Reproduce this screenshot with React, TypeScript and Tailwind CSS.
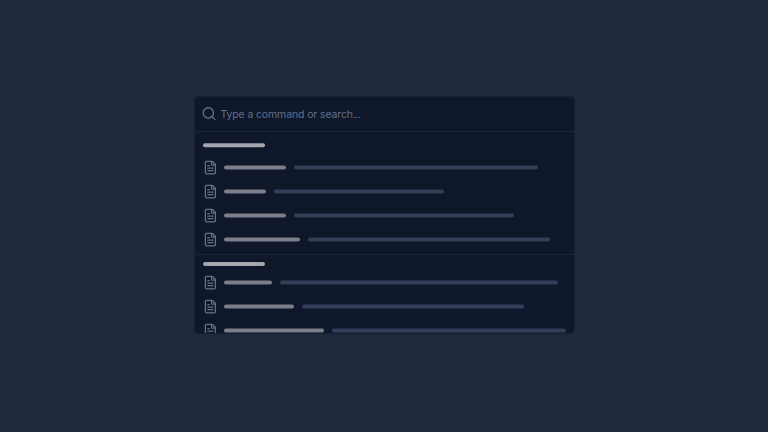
import { FileText, Search } from "lucide-react";

type Row = { title: string; detail: string };

const recent: Row[] = [
  { title: "w-[62px]", detail: "w-[244px]" },
  { title: "w-[42px]", detail: "w-[170px]" },
  { title: "w-[62px]", detail: "w-[220px]" },
  { title: "w-[76px]", detail: "w-[242px]" },
];

const more: Row[] = [
  { title: "w-[48px]", detail: "w-[278px]" },
  { title: "w-[70px]", detail: "w-[222px]" },
  { title: "w-[100px]", detail: "w-[234px]" },
];

function Rows({ items, shift }: { items: Row[]; shift: string }) {
  return (
    <ul className={shift}>
      {items.map((row, i) => (
        <li key={i} className="flex h-6 items-center">
          <FileText size={15} strokeWidth={2} className="mr-[6px] shrink-0 translate-x-[-0.1px] translate-y-[-0.4px] text-[#62748f]" />
          <span className={`mr-2 h-1 shrink-0 rounded-full bg-[#7c7f8a] ${row.title}`} />
          <span className={`h-1 shrink-0 rounded-full bg-[#333f58] ${row.detail}`} />
        </li>
      ))}
    </ul>
  );
}

export default function App() {
  return (
    <main className="flex h-screen justify-center bg-[#1e293b] pt-[96px] pl-px">
      <section className="h-[238px] w-[381px] overflow-hidden rounded-[5px] border border-[#172033] bg-[#0f172a]">
        <header className="flex h-[35px] items-center border-b border-[#1c2639] pl-[6px]">
          <Search size={15.5} strokeWidth={2} className="mr-[4px] shrink-0 translate-x-[0.2px] translate-y-[-0.2px] text-[#62748f]" />
          <span className="pt-[2px] font-[Inter,sans-serif] text-[10.5px] leading-4 tracking-[-0.012em] text-[#5f708c]">
            Type a command or search<span className="tracking-[-0.06em]">...</span>
          </span>
        </header>
        <div className="h-[123px] border-b border-[#1c2639] pt-[11px] pl-2">
          <div className="mb-[9px] h-1 w-[62px] translate-y-[0.25px] rounded-full bg-[#a5a6ae]" />
          <Rows items={recent} shift="translate-y-[-0.5px]" />
        </div>
        <div className="pt-[7px] pl-2">
          <div className="mb-1 h-1 w-[62px] rounded-full bg-[#a5a6ae]" />
          <Rows items={more} shift="translate-y-[0.5px]" />
        </div>
      </section>
    </main>
  );
}
